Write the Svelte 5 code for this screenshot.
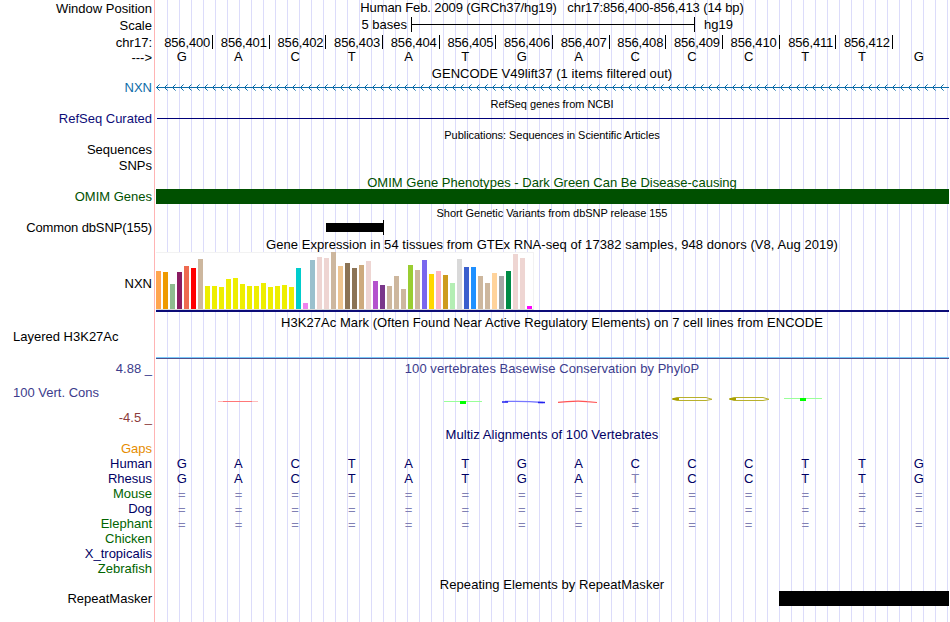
<script>
  const bases = 'GACTATGACCCTTG'.split('');
  // the ruler stops one base short of the window's right edge
  const positions = Array.from({ length: 13 }, (_, i) => `856,${400 + i}`);

  // [colour, bar height in px], one for each GTEx tissue
  const tissues = [
    ['#ffa54f', 38], ['#ee9a00', 37], ['#8fbc8f', 25], ['#8b1c62', 37], ['#ee6a50', 43],
    ['#ff0000', 41], ['#cdb79e', 50], ['#eeee00', 23], ['#eeee00', 23], ['#eeee00', 22],
    ['#eeee00', 30], ['#eeee00', 31], ['#eeee00', 25], ['#eeee00', 23], ['#eeee00', 23],
    ['#eeee00', 26], ['#eeee00', 22], ['#eeee00', 23], ['#eeee00', 24], ['#eeee00', 22],
    ['#00cdcd', 41], ['#ee82ee', 6], ['#9ac0cd', 49], ['#eed5d2', 52], ['#eed5d2', 51],
    ['#cdb79e', 57], ['#eec591', 43], ['#8b7355', 46], ['#8b7355', 41], ['#cdaa7d', 44],
    ['#eed5d2', 48], ['#b452cd', 28], ['#7a378b', 24], ['#cdb79e', 23], ['#cdb79e', 33],
    ['#cdb79e', 20], ['#9acd32', 44], ['#cdb79e', 39], ['#7a67ee', 49], ['#ffd700', 35],
    ['#ffb6c1', 38], ['#cd9b1d', 34], ['#b4eeb4', 26], ['#d9d9d9', 50], ['#3a5fcd', 42],
    ['#1e90ff', 42], ['#cdb79e', 33], ['#cdb79e', 26], ['#ffd39b', 36], ['#a6a6a6', 33],
    ['#008b45', 38], ['#eed5d2', 55], ['#eed5d2', 51], ['#ff00ff', 3]
  ];

  const match = bases.map((base) => ({ base, faint: false }));
  const gap = bases.map(() => ({ base: '=', faint: true }));

  const species = [
    { name: 'Gaps', tone: 'orange', cells: [] },
    { name: 'Human', tone: 'navy', cells: match },
    {
      name: 'Rhesus',
      tone: 'navy',
      cells: match.map((cell, i) => (i === 8 ? { base: 'T', faint: true } : cell))
    },
    { name: 'Mouse', tone: 'green', cells: gap },
    { name: 'Dog', tone: 'navy', cells: gap },
    { name: 'Elephant', tone: 'green', cells: gap },
    { name: 'Chicken', tone: 'green', cells: [] },
    { name: 'X_tropicalis', tone: 'navy', cells: [] },
    { name: 'Zebrafish', tone: 'green', cells: [] }
  ];
</script>

{#snippet title(text, cls = '')}
  <div class="row {cls}">
    <div class="label"></div>
    <div class="track title"><span>{text}</span></div>
  </div>
{/snippet}

<main class="browser">
  <div class="row first">
    <div class="label">Window Position</div>
    <div class="track title window"><span>Human Feb. 2009 (GRCh37/hg19) &nbsp; chr17:856,400-856,413 (14 bp)</span></div>
  </div>
  <div class="row scale">
    <div class="label">Scale</div>
    <div class="track scale-track">
      <span class="scale-text">5 bases</span>
      <span class="scale-bar"></span>
      <span>hg19</span>
    </div>
  </div>
  <div class="row ruler">
    <div class="label">chr17:</div>
    <div class="track ruler-track">
      {#each positions as position}
        <span class="tick">{position}</span>
      {/each}
    </div>
  </div>
  <div class="row sequence">
    <div class="label">---&gt;</div>
    <div class="track bases">
      {#each bases as base}
        <span>{base}</span>
      {/each}
    </div>
  </div>

  {@render title('GENCODE V49lift37 (1 items filtered out)', 'low')}
  <div class="row">
    <div class="label blue">NXN</div>
    <div class="track">
      <svg class="intron" width="793" height="15" shape-rendering="crispEdges">
        <defs>
          <pattern id="chevron" width="8" height="15" patternUnits="userSpaceOnUse">
            <path d="M0 7h1v1h-1zM1 6h1v1h-1zM1 8h1v1h-1zM2 5h1v1h-1zM2 9h1v1h-1z" fill="#0c6ca8" />
            <path d="M3 4h1v1h-1zM3 10h1v1h-1z" fill="#6ca6cc" />
          </pattern>
        </defs>
        <rect y="7" width="793" height="1" fill="#0c6ca8" />
        <rect width="793" height="15" fill="url(#chevron)" />
      </svg>
    </div>
  </div>

  {@render title('RefSeq genes from NCBI', 'small tall')}
  <div class="row">
    <div class="label navy-label">RefSeq Curated</div>
    <div class="track"><div class="refseq"></div></div>
  </div>

  {@render title('Publications: Sequences in Scientific Articles', 'small tall')}
  <div class="row"><div class="label">Sequences</div></div>
  <div class="row snps"><div class="label">SNPs</div></div>

  {@render title('OMIM Gene Phenotypes - Dark Green Can Be Disease-causing', 'omim-title')}
  <div class="row">
    <div class="label omim">OMIM Genes</div>
    <div class="track"><div class="omim-bar"></div></div>
  </div>

  {@render title('Short Genetic Variants from dbSNP release 155', 'small tall')}
  <div class="row">
    <div class="label tight">Common dbSNP(155)</div>
    <div class="track variant">
      <span class="variant-bar"></span>
      <span class="variant-end"></span>
    </div>
  </div>

  {@render title('Gene Expression in 54 tissues from GTEx RNA-seq of 17382 samples, 948 donors (V8, Aug 2019)', 'gtex-title')}
  <div class="row gtex">
    <div class="label">NXN</div>
    <div class="track">
      <div class="chart">
        {#each tissues as [color, height]}
          <span style="background:{color}; height:{height}px"></span>
        {/each}
      </div>
      <div class="gene-line"></div>
    </div>
  </div>

  {@render title('H3K27Ac Mark (Often Found Near Active Regulatory Elements) on 7 cell lines from ENCODE', 'tall')}
  <div class="row layered">
    <div class="label left">Layered H3K27Ac</div>
    <div class="track layered-track"><div class="signal"></div></div>
  </div>

  <div class="row phylop-title">
    <div class="label upper">4.88 _</div>
    <div class="track title slate"><span>100 vertebrates Basewise Conservation by PhyloP</span></div>
  </div>
  <div class="row phylop">
    <div class="label phylop-label">
      <span class="name">100 Vert. Cons</span>
      <span class="lower">-4.5 _</span>
    </div>
    <div class="track">
      <!-- sequence logo letters, squashed flat by the low scores -->
      <svg class="logo" width="794" height="50" viewBox="0 1 794 50">
        <path d="M62 25.5h40" stroke="#fbb" />
        <path d="M67 25.5h29" stroke="#f77" />
        <path d="M288 25.5h38M628 22.5h38" stroke="#9f9" />
        <path d="M304 25h6v3h-6zM644 22h6v3h-6z" fill="#0f0" />
        <path d="M349 25.5q20 -.6 38 1" fill="none" stroke="#77f" stroke-width="1.4" />
        <path d="M346 26h6M382 26.5h7" stroke="#22e" stroke-width="1.5" />
        <path d="M402 26.3l9 -.6q12 -1 20 0l10 .8" fill="none" stroke="#f55" stroke-width="1.2" />
        {#each [516, 573] as x}
          <g transform="translate({x} 0)" fill="none" stroke="#b8b02d">
            <path d="M0 23l5 -1.5h29l6 1.8M0 23l5 1.5h29l6 -1.2" />
            <path d="M1 23h6" stroke="#a8a000" stroke-width="2" />
          </g>
        {/each}
      </svg>
    </div>
  </div>

  {@render title('Multiz Alignments of 100 Vertebrates', 'multiz-title')}
  {#each species as { name, tone, cells }}
    <div class="row">
      <div class="label {tone}">{name}</div>
      <div class="track bases aligned">
        {#each cells as cell}
          <span class:faint={cell.faint} class:gap={cell.base === '='}>{cell.base}</span>
        {/each}
      </div>
    </div>
  {/each}

  {@render title('Repeating Elements by RepeatMasker', 'low')}
  <div class="row">
    <div class="label">RepeatMasker</div>
    <div class="track"><div class="repeat-bar"></div></div>
  </div>
</main>

<style>
  .browser {
    box-sizing: border-box;
    width: 950px;
    height: 622px;
    overflow: hidden;
    background:
      linear-gradient(#ffb4b4, #ffb4b4) 154px 0 / 1px 100% no-repeat,
      repeating-linear-gradient(90deg, #dcdcfa 0 1px, transparent 1px 12px) 167px 0 / 783px 100% no-repeat,
      #fff;
    color: #000;
    font: 13px/15px "Liberation Sans", Arial, sans-serif;
    white-space: nowrap;
  }

  .row {
    display: flex;
    height: 15px;
  }

  .label {
    box-sizing: border-box;
    flex: none;
    width: 156px;
    padding-right: 4px;
    text-align: right;
  }

  .track {
    flex: none;
    width: 794px;
  }

  .title {
    width: 792px;
    letter-spacing: 0.05px;
    text-align: center;
  }

  .first { height: 17px; line-height: 17px; }
  .window { line-height: 15px; letter-spacing: -0.1px; }
  .scale { height: 16px; line-height: 17px; }
  .ruler { height: 16px; line-height: 19px; }
  .sequence { height: 16px; line-height: 18px; }
  .bases { line-height: 15px; }
  .low { line-height: 17px; }
  .tall { height: 16px; line-height: 18px; }
  .small .title { font-size: 11px; letter-spacing: -0.05px; }
  .snps { height: 16px; line-height: 17px; }
  .tight { letter-spacing: -0.12px; }

  .scale-track {
    display: flex;
    line-height: 16px;
  }

  .scale-text {
    width: 251px;
    margin-right: 4px;
    text-align: right;
  }

  .scale-bar {
    box-sizing: border-box;
    width: 284px;
    height: 15px;
    margin-right: 9px;
    border: solid #000;
    border-width: 0 1px;
    background: linear-gradient(#000, #000) 0 7px / 100% 1px no-repeat;
  }

  .ruler-track {
    display: flex;
    padding: 2px 0 0 0.5px;
    box-sizing: border-box;
    line-height: 16px;
    letter-spacing: -0.15px;
  }

  .tick {
    box-sizing: border-box;
    width: 56.643px;
    height: 14px;
    padding-right: 2px;
    border-right: 1px solid #000;
    text-align: right;
  }

  .bases {
    display: flex;
    margin-left: -2.6px;
  }

  .bases span {
    width: 56.7px;
    text-align: center;
  }

  .aligned { color: #000064; }
  .bases .faint { color: #8080b4; }
  .bases .gap { line-height: 17px; }

  .intron { display: block; }

  .refseq {
    height: 1px;
    margin: 7px 1px 0;
    background: #000078;
  }

  .omim-title { height: 16px; line-height: 20px; color: #005000; }
  .omim-title .title { letter-spacing: 0.02px; }

  .omim-bar {
    width: 793px;
    height: 15px;
    background: #005000;
  }

  .variant { display: flex; }

  .variant-bar {
    width: 57px;
    height: 9px;
    margin: 3px 0 0 170px;
    background: #000;
  }

  .variant-end {
    width: 1px;
    height: 15px;
    background: #000;
  }

  .gtex-title { height: 17px; line-height: 20px; }

  .gtex {
    height: 62px;
    line-height: 63px;
  }

  .chart {
    display: flex;
    box-sizing: border-box;
    align-items: flex-end;
    gap: 2px;
    width: 378px;
    height: 58px;
    border-top: 1px solid #f2f2f2;
    border-right: 1px solid #f2f2f2;
    border-bottom: 1px solid #d9d9d9;
    background: #fff;
  }

  .chart span {
    flex: none;
    width: 5px;
  }

  .gene-line {
    width: 793px;
    height: 2px;
    background: #0c0c78;
  }

  .layered { height: 31px; }

  .left {
    padding-left: 13px;
    line-height: 13px;
    text-align: left;
  }

  .layered-track {
    display: flex;
    align-items: flex-end;
  }

  .signal {
    box-sizing: border-box;
    width: 793px;
    height: 2px;
    margin-bottom: 2px;
    border-bottom: 1px solid #50508c;
    background: #78c8fa;
  }

  .phylop-title { height: 16px; line-height: 16px; }
  .slate, .upper { color: #3c3c8c; }
  .lower { color: #8c3c3c; }
  .phylop { height: 50px; }

  .phylop-label {
    display: flex;
    flex-direction: column;
    justify-content: space-between;
    padding: 8px 4px 2px 13px;
  }

  .name {
    color: #3c3c8c;
    text-align: left;
  }

  .logo { display: block; }
  .multiz-title { height: 14px; color: #000064; }
  .blue { color: #0c6ca8; }
  .navy-label { color: #0c0c78; }
  .omim { color: #005000; }
  .navy { color: #000064; }
  .green { color: #006400; }
  .orange { color: #e68c00; }

  .repeat-bar {
    width: 170px;
    height: 15px;
    margin-left: 623px;
    background: #000;
  }
</style>
